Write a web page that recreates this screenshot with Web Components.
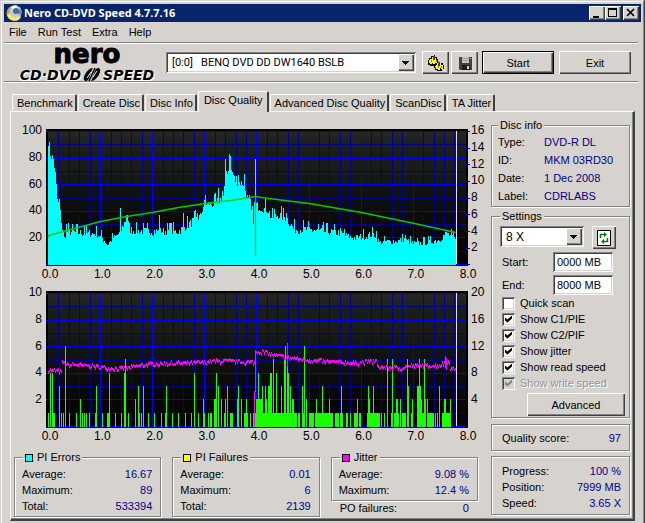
<!DOCTYPE html>
<html lang="en">
<head>
<meta charset="utf-8">
<title>Nero CD-DVD Speed 4.7.7.16</title>
<style>
  :root {
    --face: #d6d3ce;
    --shade: #848284;
    --dark: #424142;
    --value: #00008b;
    --raised: inset 1px 1px 0 #fff, inset -1px -1px 0 #424142, inset -2px -2px 0 #848284;
    --sunken: inset 1px 1px 0 #848284, inset -1px -1px 0 #fff, inset 2px 2px 0 #424142, inset -2px -2px 0 #d6d3ce;
  }
  body { margin: 0; background: var(--face); color: #000; font: 11px/16px "Liberation Sans", Arial, sans-serif; }
</style>
</head>
<body>
<speed-app></speed-app>

<script>
/* Small helper: every element renders once into its shadow root. */
class BaseElement extends HTMLElement {
  constructor() {
    super();
    this._shadow = this.attachShadow({ mode: 'open' });
  }

  connectedCallback() {
    this._shadow.innerHTML = this.render();
  }
}

/** <title-bar heading="..."> caption with the three window buttons. */
class TitleBar extends BaseElement {
  render() {
    return `
      <style>
        :host { display: flex; align-items: center; height: 18px; background: #08246b; color: #fff; padding: 0 2px; }
        .icon { width: 17px; height: 18px; }
        h1 { flex: 1; margin: 0 0 0 1px; font: bold 11px/18px "Noto Sans", "Open Sans", sans-serif; }
        button { width: 16px; height: 14px; padding: 0; border: 0; background: var(--face); box-shadow: var(--raised); }
        button:last-child { margin-left: 2px; }
        button svg { display: block; width: 16px; height: 14px; }
      </style>
      <svg class="icon" viewBox="0 0 17 18">
        <circle cx="8" cy="9" r="7.5" fill="#c9a227"/>
        <path d="M1 10a7.5 7.5 0 0 0 14 3L8 9z" fill="#ffe95c"/>
        <circle cx="9.5" cy="7.5" r="6" fill="#b9cdda"/>
        <path d="M9.5 7.5 5 3.5a6 6 0 0 1 6-2z" fill="#f5fbff"/>
        <path d="M9.5 7.5 15 5a6 6 0 0 1-1 6z" fill="#5e93c4"/>
        <circle cx="10" cy="7" r="3" fill="#2e6fae"/>
        <path d="m9 5 3 4" stroke="#d33f2e" stroke-width="1.5"/>
      </svg>
      <h1>${this.getAttribute('heading')}</h1>
      <button aria-label="Minimize"><svg viewBox="0 0 16 14"><path d="M4 10h6v2H4z"/></svg></button>
      <button aria-label="Maximize"><svg viewBox="0 0 16 14"><path d="M3 2h9v9H3zM4 4v6h7V4z" fill-rule="evenodd"/></svg></button>
      <button aria-label="Close"><svg viewBox="0 0 16 14"><path d="m4 3 7 7m0-7-7 7" stroke="#000" stroke-width="1.7"/></svg></button>
    `;
  }
}

/** <menu-bar items="File,..."> */
class MenuBar extends BaseElement {
  render() {
    const items = this.getAttribute('items').split(',');
    return `
      <style>
        :host { display: flex; gap: 11px; height: 20px; padding: 0 5px; border-bottom: 1px solid var(--shade);
                margin-right: 3px; box-shadow: 0 1px 0 #fff; }
        button { font: inherit; line-height: 20px; border: 0; background: none; padding: 0; color: inherit; }
      </style>
      ${items.map((item) => `<button>${item}</button>`).join('')}
    `;
  }
}

/** Raised push button, content comes from the slot. */
class PushButton extends BaseElement {
  render() {
    return `
      <style>
        :host { display: block; height: 23px; }
        button { display: flex; align-items: center; justify-content: center; width: 100%; height: 100%; padding: 0;
                 font: inherit; color: inherit; border: 0; background: var(--face); box-shadow: var(--raised); }
        :host([default]) button { border: 1px solid #000; }
      </style>
      <button aria-label="${this.getAttribute('label') || this.textContent.trim()}"><slot></slot></button>
    `;
  }
}

/** <drop-down label="..." value="..."> */
class DropDown extends BaseElement {
  render() {
    return `
      <style>
        :host { display: grid; height: 21px; background: #fff; box-shadow: var(--sunken); }
        select, .arrow { grid-area: 1 / 1; }
        select { appearance: none; font: var(--field-font, 11px/16px Roboto, sans-serif); color: #000; border: 0;
                 background: none; width: 100%; padding: 0 20px 0 6px; white-space: pre; }
        .arrow { justify-self: end; width: 16px; margin: 2px; background: var(--face); box-shadow: var(--raised); pointer-events: none; }
        svg { display: block; width: 16px; height: 17px; }
      </style>
      <select aria-label="${this.getAttribute('label')}"><option>${this.getAttribute('value')}</option></select>
      <span class="arrow"><svg viewBox="0 0 16 17"><path d="M4 7h7v1h-1v1H9v1H8v1H7v-1H6V9H5V8H4z"/></svg></span>
    `;
  }
}

/** Program logo: word mark on top, product name with a disc below. */
class NeroLogo extends BaseElement {
  render() {
    return `
      <style>
        :host { display: flex; flex-direction: column; align-items: center; color: #000;
                font-family: "DejaVu Sans", sans-serif; font-weight: bold; }
        .brand { font-size: 26px; line-height: 20px; height: 23px; padding-top: 1px; -webkit-text-stroke: 1px #000; }
        .product { display: flex; align-items: center; gap: 2px; font-size: 14px; line-height: 12px; font-style: italic;
                   text-shadow: 1px 1px 0 #fff, -1px 1px 0 #fff; }
        svg { width: 18px; height: 15px; }
      </style>
      <span class="brand">nero</span>
      <span class="product">CD·DVD
        <svg viewBox="0 0 18 15">
          <path d="M10 1C6 1 2 6 1 10c-1 4 2 5 4 3C7 11 8 3 10 1z"/>
          <path d="M8 14c4 0 8-5 9-9s-2-5-4-3C11 4 10 12 8 14z"/>
          <path d="m12 1-6 13" stroke="#000" stroke-width="1.5"/>
          <path d="M8 5 4 11m10-7-4 6" stroke="#fff"/>
        </svg>SPEED</span>
    `;
  }
}

/** <tab-strip tabs="A,B" active="B"> */
class TabStrip extends BaseElement {
  render() {
    const active = this.getAttribute('active');
    const tabs = this.getAttribute('tabs').split(',');
    return `
      <style>
        :host { display: flex; align-items: flex-end; height: 20px; padding-left: 2px; }
        button { font: inherit; color: inherit; height: 17px; padding: 0 2px 0 4px; white-space: nowrap;
                 border: 1px solid #fff; border-right: 2px solid var(--dark); border-bottom: 0; margin-right: 1px;
                 border-radius: 2px 2px 0 0; background: var(--face); }
        .active { height: 21px; margin-bottom: -1px; padding: 0 4px 4px 5px; }
      </style>
      ${tabs.map((tab) => `<button class="${tab === active ? 'active' : ''}">${tab}</button>`).join('')}
    `;
  }
}

/** <group-box heading="..." swatch="#0ff"> etched frame, optional legend. */
class GroupBox extends BaseElement {
  render() {
    const heading = this.getAttribute('heading');
    const swatch = this.getAttribute('swatch');
    return `
      <style>
        :host { display: block; }
        fieldset { margin: 0; padding: var(--group-padding, 0 8px); min-width: 0; border: 1px solid var(--shade);
                   box-shadow: inset 1px 1px 0 #fff, 1px 1px 0 #fff; }
        legend { display: flex; align-items: center; gap: 4px; height: 15px; line-height: 15px; padding: 0 2px;
                 margin-left: var(--legend-left, 0); background: var(--face); }
        i { width: 6px; height: 6px; border: 1px solid #000; }
      </style>
      <fieldset>
        ${heading ? `<legend>${swatch ? `<i style="background:${swatch}"></i>` : ''}${heading}</legend>` : ''}
        <slot></slot>
      </fieldset>
    `;
  }
}

/** <info-row label="..." value="..."> value hugs the right edge unless "start". */
class InfoRow extends BaseElement {
  render() {
    return `
      <style>
        :host { display: flex; justify-content: space-between; line-height: var(--row, 16px); white-space: nowrap; }
        b { font-weight: normal; color: var(--value); }
        :host([start]) { justify-content: flex-start; }
        :host([start]) span { width: 46px; }
      </style>
      <span>${this.getAttribute('label')}</span><b>${this.getAttribute('value')}</b>
    `;
  }
}

/** <text-field label="..." value="..."> */
class TextField extends BaseElement {
  render() {
    return `
      <style>
        :host { display: flex; justify-content: space-between; align-items: center; }
        input { box-sizing: border-box; width: 60px; height: 20px; border: 0; padding: 0 4px; font: inherit;
                background: #fff; box-shadow: var(--sunken); }
      </style>
      <label for="field">${this.getAttribute('label')}</label>
      <input id="field" value="${this.getAttribute('value')}">
    `;
  }
}

/** <check-item label="..." checked disabled> */
class CheckItem extends BaseElement {
  render() {
    const flags = ['checked', 'disabled'].filter((name) => this.hasAttribute(name)).join(' ');
    return `
      <style>
        :host { display: block; }
        label { display: flex; align-items: center; gap: 5px; height: 16px; }
        input { appearance: none; display: grid; place-items: center; width: 13px; height: 13px; margin: 0; background: #fff; box-shadow: var(--sunken); }
        input:checked::before { content: ""; width: 7px; height: 7px; background: #000;
                                clip-path: polygon(0 28%, 36% 58%, 100% 0, 100% 42%, 36% 100%, 0 70%); }
        input:disabled { background: var(--face); }
        input:disabled::before { background: var(--shade); }
        :host([disabled]) { color: #949294; text-shadow: 1px 1px 0 #fff; }
      </style>
      <label><input type="checkbox" ${flags}>${this.getAttribute('label')}</label>
    `;
  }
}

/* Key points of the curves: x is the offset in the plot (0..408), then the value. */
const PIE = [[0, 86], [3, 80], [5, 78], [7, 67], [9, 48], [12, 38], [14, 26], [16, 19], [18, 24], [30, 23], [48, 22],
  [54, 19], [59, 14], [65, 19], [72, 23], [78, 34], [82, 25], [90, 24], [130, 24], [140, 29], [152, 35], [156, 45],
  [165, 44], [175, 50], [178, 69], [183, 70], [187, 62], [195, 60], [201, 44], [205, 33], [206, 44], [212, 42],
  [220, 40], [223, 34], [230, 36], [238, 34], [245, 26], [260, 25], [290, 23], [305, 19], [314, 20], [326, 22],
  [331, 16], [350, 17], [356, 18], [365, 15], [380, 16], [392, 18], [398, 23], [407, 18]];
const PIE_PEAKS = { 0: 89, 4: 82, 11: 49, 18: 30, 36: 29, 72: 42, 78: 37, 79: 37, 111: 37, 122: 31, 135: 38, 149: 38,
  157: 52, 170: 57, 174: 55, 177: 79, 181: 83, 182: 81, 188: 66, 190: 67, 196: 68, 207: 79, 226: 41, 238: 38, 270: 30,
  274: 29, 292: 27, 296: 26, 328: 25, 357: 22, 397: 24, 398: 24 };
const SPEED = [[0, 20], [0, 22], [26, 27], [52, 32], [78, 36], [104, 39], [130, 43], [157, 46], [182, 48], [207, 51],
  [207, 7], [207, 51], [220, 50], [261, 46], [313, 39], [366, 31], [407, 24]];
const JITTER = [[0, 4.2], [13, 4.1], [14, 4.8], [18, 4.6], [30, 4.6], [45, 4.5], [60, 4.35], [78, 4.35], [95, 4.6],
  [112, 4.7], [145, 4.75], [175, 4.9], [200, 4.8], [207, 4.8], [208, 5.6], [214, 5.6], [225, 5.35], [238, 5.15],
  [258, 5], [275, 4.85], [308, 4.75], [328, 4.9], [329, 4.45], [352, 4.35], [365, 4.55], [390, 4.55], [398, 4.8],
  [401, 4.9], [402, 4.3], [407, 4.3]];
/* PI failures: "offset:value", or "from-to:value" for a run. */
const PIF = `0:1 2:4 4:4 5-6:1 11:3 13:1 15:1 17:6 21:1 28:1 32:2 34:1 36:1 38:1 41:1 47:1 48:3 54:1 59-60:1 61:4
  67:1 73:1 76:4 77:5 80:1 87:2 90:3 91:1 93:1 95:3 100:1 106:1 113:1 117:1 118:3 124:1 130:1 137:1 143:1 146:4
  150:1 155:2 156:1 160:1 162-163:1 166-167:2 168:4 170:3 173:2 176:1 177:2 179:3 182-184:1 189:2 190:3 193:2
  196-199:1 198:2 202:1 205-248:1 206:2 208:2 209-213:2 210:4 214:3 217:3 218:2 220-223:3
  222-223:4 225:5 228:4 233:3 236:5 237:6 239:5 240:4 242:3 244-245:2 250-251:1 254:3 255:1 256:6 258:2 261-265:1
  267-273:1 268:2 274:3 275-284:1 281:2 287-290:1 292-294:1 293:3 298-299:1 302:1 306-308:1 309:2 311-312:1
  319-328:1 320:3 321:2 325:3 329-331:1 333:1 336:1 339:5 343:1 344:5 346-350:1 348-349:2 352:2 354-357:1 359:5
  360:3 363:1 364:2 369-375:1 369:3 370:3 371:5 372:3 373:2 376:5 377:2 379:2 380-385:1 387:1 389:1 391:3
  394-399:1 396-397:2 400-402:1 402:2`;

/** <scan-chart kind="pie|pif" left="..." right="..." bottom="..."> plot plus its three axes. */
class ScanChart extends BaseElement {
  #seed = 7;

  #random() {
    this.#seed = (this.#seed * 16807) % 2147483647;
    return this.#seed / 2147483647;
  }

  #valueAt(points, x) {
    const i = Math.max(1, points.findIndex((p) => p[0] >= x));
    const [x0, y0] = points[i - 1];
    const [x1, y1] = points[i];
    return x1 === x0 ? y1 : y0 + (y1 - y0) * (x - x0) / (x1 - x0);
  }

  #grid() {
    let minor = '';
    let major = '';
    for (let i = 0; i <= 40; i++) {
      const line = `M${Math.round(2 + i * 10.42) + 0.5} 2v133`;
      if (i % 5) minor += line; else if (i && i < 40) major += line;
    }
    for (let i = 0; i <= 10; i++) {
      const y = Math.round(2 + i * 13.3) + 0.5;
      if (i % 2) minor += `M2 ${y}h418`; else major += `M0 ${y}h420`;
    }
    return `<path d="${minor}" stroke="#00008c"/><path d="${major}" stroke="#0000ff"/>`;
  }

  #pie() {
    let bars = '';
    for (let x = 0; x < 408; x++) {
      const base = this.#valueAt(PIE, x);
      const rnd = this.#random();
      const noise = (rnd - 0.4) * 7 + (rnd > 0.9 ? 4 : 0);
      const value = PIE_PEAKS[x] || base + noise * Math.min(1, base / 26);
      bars += `M${x + 2.5} 136v${-Math.round(value * 1.33) - 1}`;
    }
    const line = SPEED.map(([x, v]) => `${x + 2.5},${Math.round(135 - v * 1.33) + 0.5}`).join(' ');
    return `<path d="${bars}" stroke="#00ffff" shape-rendering="crispEdges"/>
      <polyline points="${line}" fill="none" stroke="#00ce00" stroke-width="1.3"/>`;
  }

  #pif() {
    let bars = '';
    PIF.trim().split(/\s+/).forEach((item) => {
      const [range, value] = item.split(':');
      const [from, to = from] = range.split('-').map(Number);
      for (let x = from; x <= to; x++) bars += `M${x + 2.5} 136v${-Math.round(value * 13.3) - 1}`;
    });
    let line = '';
    for (let x = 0; x < 408; x++) {
      const y = 135 - (this.#valueAt(JITTER, x) + (this.#random() - 0.5) * 0.3) * 13.3;
      const reach = 1 + Math.round(this.#random() * 1.2);
      line += `M${x + 2.5} ${Math.round(y) - 1}v${reach + 1}`;
    }
    line += 'M209.5 59v42M241.5 52v24M208.5 100v35M399.5 65v12M400.5 67v12';
    return `<path d="${bars}" stroke="#18ff00" shape-rendering="crispEdges"/>
      <path d="${line}" stroke="#ff00ff" shape-rendering="crispEdges"/>`;
  }

  render() {
    const kind = this.getAttribute('kind');
    const labels = (name) => this.getAttribute(name).split(',').map((text) => `<span>${text}</span>`).join('');
    return `
      <style>
        :host { display: grid; grid-template-columns: 32px 1fr 17px; grid-template-rows: 137px 16px; margin-top: 9px;
                font-size: 12px; line-height: 16px; }
        svg { display: block; width: 100%; height: 137px; overflow: visible; }
        .left, .right { display: flex; flex-direction: column; justify-content: space-between; margin: -7px 0 -6px; }
        .left { text-align: right; padding-right: 4px; }
        .right { padding-left: 3px; }
        .left span, .right span { height: 16px; }
        .bottom { grid-column: 2; display: flex; justify-content: space-between; margin: 0 -16px 0 -12px; }
        .bottom span { width: 32px; text-align: center; }
      </style>
      <div class="left">${labels('left')}</div>
      <svg viewBox="0 0 422 137" preserveAspectRatio="none">
        <defs>
          <linearGradient id="back" x2="0" y2="1">
            <stop offset="0" stop-color="#262626"/><stop offset=".14" stop-color="#181e1a"/>
            <stop offset=".28" stop-color="#1b1b1b"/><stop offset=".45" stop-color="#0f1412"/>
            <stop offset=".62" stop-color="#0c0c0c"/><stop offset="1" stop-color="#000"/>
          </linearGradient>
        </defs>
        <path d="M0 0h422v137H0z"/>
        <path d="M2 2h418v133H2z" fill="url(#back)"/>
        ${this.#grid()}
        ${kind === 'pie' ? this.#pie() : this.#pif()}
        ${kind === 'pie' ? '<path d="M420 2.5h4m-4 17h4m-4 16h4m-4 17h4m-4 17h4m-4 16h4m-4 17h4m-4 17h4m-4 16h4" stroke="#0000ff"/>' : ''}
        <path d="M410.5 2v133" stroke="#e7e3e7"/>
      </svg>
      <div class="right">${labels('right')}</div>
      <div class="bottom">${labels('bottom')}</div>
    `;
  }
}

/** The whole window. */
class SpeedApp extends BaseElement {
  render() {
    return `
      <style>
        :host { display: block; box-sizing: border-box; min-height: 100vh; padding: 4px 4px 5px;
                box-shadow: inset -1px -1px 0 var(--dark), inset 1px 1px 0 var(--face), inset -2px -2px 0 var(--shade), inset 2px 2px 0 #fff; }
        .toolbar { display: flex; align-items: center; height: 37px; margin: 1px 3px 0 0; padding: 0 7px 0 9px;
                   border-bottom: 1px solid var(--shade); box-shadow: 0 1px 0 #fff; }
        nero-logo { width: 148px; margin-right: 5px; }
        .drive { flex: 1; margin-right: 6px; }
        .tool { width: 27px; margin-right: 2px; }
        .main { width: 72px; margin-left: 2px; }
        .main + .main { margin-left: 5px; }
        .tool svg { width: 18px; height: 18px; }
        tab-strip { margin: 9px 6px 0; }
        main { display: grid; grid-template-columns: 1fr 139px; gap: 6px; margin: 0 6px; padding: 6px 3px 2px 3px;
               border: 1px solid #fff; border-right: 2px solid var(--dark); border-bottom: 2px solid var(--dark);
               box-shadow: inset -1px -1px 0 var(--shade); }
        .charts { padding-top: 2px; }
        .stats { display: grid; grid-template-columns: repeat(3, 1fr); gap: 11px; align-items: start; margin: 6px 7px 0 0;
                 --group-padding: 1px 8px 2px 7px; --legend-left: 1px; }
        .after { padding: 0 9px; margin-top: -1px; }
        aside { display: flex; flex-direction: column; }
        .disc { --row: 18px; --group-padding: 0 6px 1px; height: 91px; }
        .settings { --group-padding: 2px 4px 1px 8px; }
        .quality { --group-padding: 5px 8px 4px 10px; margin-top: 6px; }
        .progress { --group-padding: 6px 8px 3px 10px; margin-top: 5px; }
        .speed { display: flex; gap: 8px; }
        .speed drop-down { width: 84px; --field-font: 12px/16px "Liberation Sans", Arial, sans-serif; }
        .speed push-button { width: 24px; }
        .fields { display: grid; gap: 3px; margin: 3px 12px 0 2px; }
        .checks { margin: 0 0 0 2px; }
        .advanced { width: 98px; margin: 2px 0 0 auto; }
      </style>
      <title-bar heading="Nero CD-DVD Speed 4.7.7.16"></title-bar>
      <menu-bar items="File,Run Test,Extra,Help"></menu-bar>
      <div class="toolbar">
        <nero-logo></nero-logo>
        <drop-down class="drive" label="Drive" value="[0:0] &nbsp; BENQ DVD DD DW1640 BSLB"></drop-down>
        <push-button class="tool" label="Options">
          <svg viewBox="0 0 18 18">
            <path d="M1 6h1V4h2V2h3V1h1v2h2v2h1v3h2v1h3v2h1v4h-2v2h-5v-1H8v-2H7v-2H3v-1H1z" fill="#000"/>
            <path d="M2 6h1V5h2V3h1v3h2V4h1v2h1v3H8v1H6V9H5v1H3V9H2z" fill="#ffff00"/>
            <path d="M8 12h1v-1h1V9h1v3h2V9h1v2h2v4h-2v-1h-1v2h-2v-1H9z" fill="#ffff00"/>
            <path d="M7 2v4m5 1v5" stroke="#848284"/>
            <path d="M4 7h1m4 0h1m1 6h1m2 0h1" stroke="#000"/>
          </svg>
        </push-button>
        <push-button class="tool" label="Save">
          <svg viewBox="0 0 18 18">
            <path d="M3 3h13v13H4l-1-1z" fill="#424142"/>
            <path d="M6 3h7v6H6z" fill="#c6c3c6"/><path d="M6 4.5h7M6 6.5h7" stroke="#a5a2a5"/>
            <path d="M6 11h8v5H6z" fill="#212021"/><path d="M11 12h2v3h-2z" fill="#d6d3ce"/>
            <path d="M14 4h1v1h-1z" fill="#d6d3ce"/>
          </svg>
        </push-button>
        <push-button class="main" default>Start</push-button>
        <push-button class="main">Exit</push-button>
      </div>
      <tab-strip active="Disc Quality"
        tabs="Benchmark,Create Disc,Disc Info,Disc Quality,Advanced Disc Quality,ScanDisc,TA Jitter"></tab-strip>
      <main>
        <section class="charts">
          <scan-chart kind="pie" left="100,80,60,40,20," right="16,14,12,10,8,6,4,2,"
            bottom="0.0,1.0,2.0,3.0,4.0,5.0,6.0,7.0,8.0"></scan-chart>
          <scan-chart kind="pif" left="10,8,6,4,2," right="20,16,12,8,4,"
            bottom="0.0,1.0,2.0,3.0,4.0,5.0,6.0,7.0,8.0"></scan-chart>
          <div class="stats">
            <group-box heading="PI Errors" swatch="#00ffff">
              <info-row label="Average:" value="16.67"></info-row>
              <info-row label="Maximum:" value="89"></info-row>
              <info-row label="Total:" value="533394"></info-row>
            </group-box>
            <group-box heading="PI Failures" swatch="#ffff00">
              <info-row label="Average:" value="0.01"></info-row>
              <info-row label="Maximum:" value="6"></info-row>
              <info-row label="Total:" value="2139"></info-row>
            </group-box>
            <div>
              <group-box heading="Jitter" swatch="#ff00ff">
                <info-row label="Average:" value="9.08 %"></info-row>
                <info-row label="Maximum:" value="12.4 %"></info-row>
              </group-box>
              <info-row class="after" label="PO failures:" value="0"></info-row>
            </div>
          </div>
        </section>
        <aside>
          <group-box class="disc" heading="Disc info">
            <info-row start label="Type:" value="DVD-R DL"></info-row>
            <info-row start label="ID:" value="MKM 03RD30"></info-row>
            <info-row start label="Date:" value="1 Dec 2008"></info-row>
            <info-row start label="Label:" value="CDRLABS"></info-row>
          </group-box>
          <group-box class="settings" heading="Settings">
            <div class="speed">
              <drop-down label="Speed" value="8 X"></drop-down>
              <push-button label="Refresh">
                <svg width="14" height="16" viewBox="0 0 14 16">
                  <path d="M.5.5h13v15H.5z" fill="#fff" stroke="#000"/>
                  <path d="M3.5 8V4.5H8M10.5 8v3.5H6" fill="none" stroke="#008200" stroke-width="1.5"/>
                  <path d="M7 2v5l3-2.5zM7 9v5l-3-2.5z" fill="#008200"/>
                </svg>
              </push-button>
            </div>
            <div class="fields">
              <text-field label="Start:" value="0000 MB"></text-field>
              <text-field label="End:" value="8000 MB"></text-field>
            </div>
            <div class="checks">
              <check-item label="Quick scan"></check-item>
              <check-item label="Show C1/PIE" checked></check-item>
              <check-item label="Show C2/PIF" checked></check-item>
              <check-item label="Show jitter" checked></check-item>
              <check-item label="Show read speed" checked></check-item>
              <check-item label="Show write speed" checked disabled></check-item>
            </div>
            <push-button class="advanced">Advanced</push-button>
          </group-box>
          <group-box class="quality">
            <info-row label="Quality score:" value="97"></info-row>
          </group-box>
          <group-box class="progress">
            <info-row label="Progress:" value="100 %"></info-row>
            <info-row label="Position:" value="7999 MB"></info-row>
            <info-row label="Speed:" value="3.65 X"></info-row>
          </group-box>
        </aside>
      </main>
    `;
  }
}

customElements.define('title-bar', TitleBar);
customElements.define('menu-bar', MenuBar);
customElements.define('push-button', PushButton);
customElements.define('drop-down', DropDown);
customElements.define('nero-logo', NeroLogo);
customElements.define('tab-strip', TabStrip);
customElements.define('group-box', GroupBox);
customElements.define('info-row', InfoRow);
customElements.define('text-field', TextField);
customElements.define('check-item', CheckItem);
customElements.define('scan-chart', ScanChart);
customElements.define('speed-app', SpeedApp);
</script>
</body>
</html>
